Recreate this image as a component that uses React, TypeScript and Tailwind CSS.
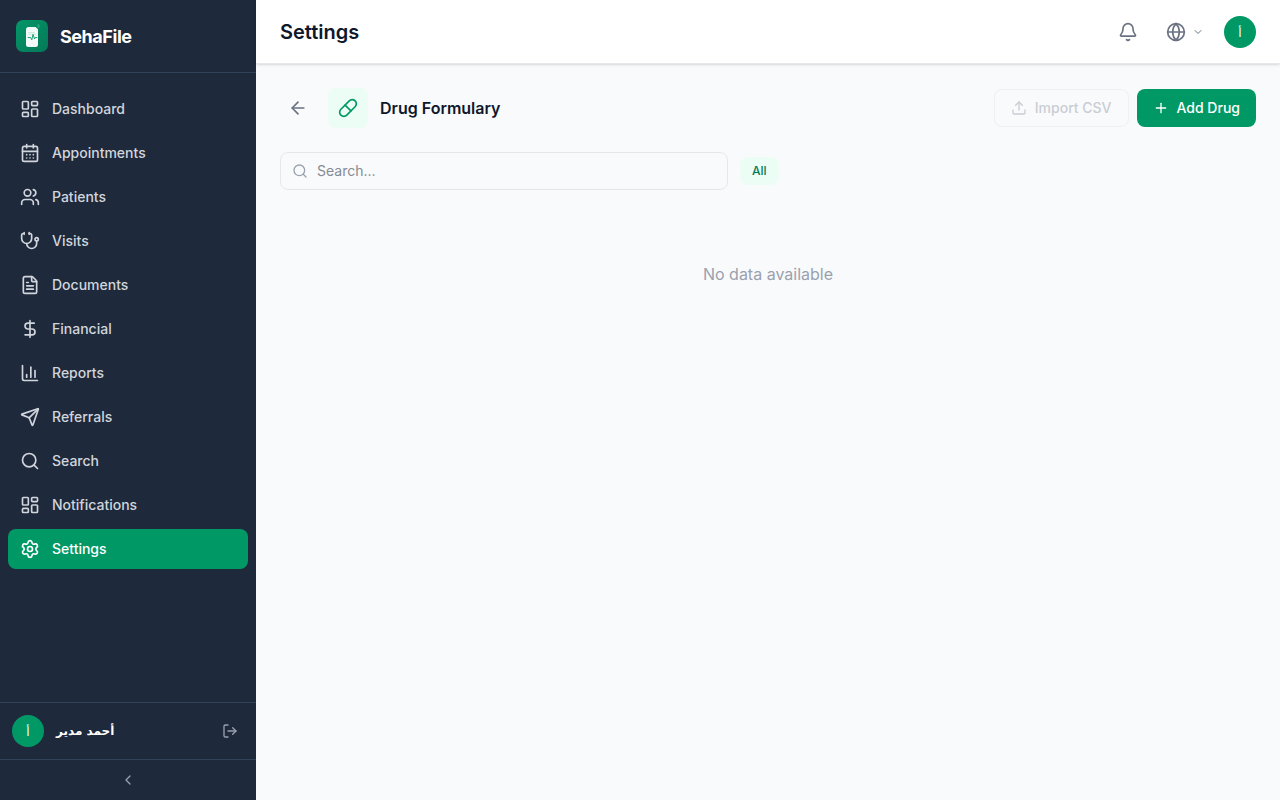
import {
  ArrowLeft,
  Bell,
  CalendarDays,
  ChartColumn,
  ChevronDown,
  ChevronLeft,
  DollarSign,
  FileText,
  Globe,
  LayoutDashboard,
  LogOut,
  Pill,
  Plus,
  Search,
  Send,
  Settings,
  Stethoscope,
  Upload,
  Users,
} from "lucide-react";
import clsx from "clsx";

const navItems = [
  { label: "Dashboard", icon: LayoutDashboard },
  { label: "Appointments", icon: CalendarDays },
  { label: "Patients", icon: Users },
  { label: "Visits", icon: Stethoscope },
  { label: "Documents", icon: FileText },
  { label: "Financial", icon: DollarSign },
  { label: "Reports", icon: ChartColumn },
  { label: "Referrals", icon: Send },
  { label: "Search", icon: Search },
  { label: "Notifications", icon: LayoutDashboard },
  { label: "Settings", icon: Settings, active: true },
];

const Logo = () => (
  <svg viewBox="0 0 32 32" className="h-8 w-8 shrink-0" aria-hidden="true">
    <defs>
      <linearGradient id="logo-bg" x1="0" y1="0" x2="1" y2="1">
        <stop offset="0" stopColor="#059669" />
        <stop offset="1" stopColor="#047857" />
      </linearGradient>
    </defs>
    <rect width="32" height="32" rx="7" fill="url(#logo-bg)" />
    <path
      d="M12.5 7h6.5c.8 0 1 .3 1.500 1l1 .8c.4.400.5.700.5 1.200v14.500a2.500 2.500 0 0 1-2.500 2.500h-7a2.500 2.500 0 0 1-2.500-2.500v-15a2.500 2.500 0 0 1 2.500-2.500z"
      fill="#fff"
      fillOpacity="0.95"
    />
    <path d="M12 12.500h7M12 14.300h8" stroke="#059669" strokeOpacity="0.2" strokeWidth="0.800" />
    <path
      d="M11.700 17.500h2.800l1.300 2.300 1.200-5.500 1.500 4.700.8-1.500h2"
      fill="none"
      stroke="#059669"
      strokeWidth="0.900"
      strokeLinejoin="round"
    />
    <ellipse cx="22.500" cy="6" rx="1.200" ry="2" fill="#a7f3d0" fillOpacity="0.25" />
  </svg>
);

const Avatar = () => (
  <span className="flex h-8 w-8 shrink-0 items-center justify-center rounded-full bg-emerald-600 pt-0.5 font-['DejaVu_Sans',sans-serif] text-xs font-medium text-white">
    أ
  </span>
);

const Sidebar = () => (
  <aside className="flex w-64 shrink-0 flex-col bg-[#1e293b]">
    <div className="flex items-center gap-3 border-b border-slate-700 px-4 py-5">
      <Logo />
      <span className="pt-px text-lg font-bold tracking-tight text-white">SehaFile</span>
    </div>

    <nav className="flex flex-1 flex-col gap-1 px-2 py-4">
      {navItems.map(({ label, icon: Icon, active }) => (
        <a
          key={label}
          href="#"
          aria-current={active ? "page" : undefined}
          className={clsx(
            "flex items-center gap-3 rounded-lg px-3 py-2.5 text-sm font-medium",
            active ? "bg-emerald-600 text-white" : "text-gray-300"
          )}
        >
          <Icon className="h-5 w-5 shrink-0" />
          {label}
        </a>
      ))}
    </nav>

    <div className="flex items-center gap-3 border-t border-slate-700 p-3">
      <Avatar />
      <span className="flex-1 font-['DejaVu_Sans',sans-serif] text-xs font-semibold text-white">أحمد مدير</span>
      <button type="button" aria-label="Log out" className="p-1.5 text-gray-400">
        <LogOut className="h-4 w-4" />
      </button>
    </div>

    <button
      type="button"
      aria-label="Collapse sidebar"
      className="flex items-center justify-center border-t border-slate-700 py-3 text-gray-400"
    >
      <ChevronLeft className="h-4 w-4" />
    </button>
  </aside>
);

const Header = () => (
  <header className="z-10 flex h-16 items-center justify-between border-b border-gray-200 bg-white px-6 shadow-sm">
    <h1 className="text-xl font-semibold text-slate-900">Settings</h1>
    <div className="flex items-center gap-3">
      <button type="button" aria-label="Notifications" className="p-2 text-gray-500">
        <Bell className="h-5 w-5" />
      </button>
      <button type="button" aria-label="Language" className="flex items-center gap-1.5 p-2 text-gray-500">
        <Globe className="h-5 w-5" />
        <ChevronDown className="h-3 w-3" />
      </button>
      <button type="button" aria-label="Account">
        <Avatar />
      </button>
    </div>
  </header>
);

const DrugFormulary = () => (
  <main className="flex flex-1 flex-col gap-6 p-6">
    <div className="flex items-center justify-between">
      <div className="flex items-center gap-3">
        <button type="button" aria-label="Back" className="p-2 text-gray-500">
          <ArrowLeft className="h-5 w-5" />
        </button>
        <div className="flex h-10 w-10 items-center justify-center rounded-lg bg-emerald-50 text-emerald-600">
          <Pill className="h-5 w-5" />
        </div>
        <h2 className="text-base font-semibold text-slate-900">Drug Formulary</h2>
      </div>
      <div className="flex gap-2">
        <button
          type="button"
          disabled
          className="flex items-center gap-2 rounded-lg border border-gray-200 px-4 py-2 text-sm font-medium text-gray-400 opacity-50"
        >
          <Upload className="h-4 w-4" />
          Import CSV
        </button>
        <button
          type="button"
          className="flex items-center gap-2 rounded-lg bg-emerald-600 px-4 py-2 text-sm font-medium text-white"
        >
          <Plus className="h-4 w-4" />
          Add Drug
        </button>
      </div>
    </div>

    <div className="flex items-center gap-3">
      <div className="relative max-w-md flex-1">
        <Search className="absolute top-1/2 left-3 h-4 w-4 -translate-y-1/2 text-gray-400" />
        <input
          type="text"
          aria-label="Search drugs"
          placeholder="Search..."
          className="block w-full rounded-lg border border-gray-200 py-2 pr-4 pl-9 text-sm text-slate-900 placeholder:text-[#868b94]"
        />
      </div>
      <button type="button" className="rounded-lg bg-emerald-50 px-3 py-1.5 text-xs font-medium text-emerald-700">
        All
      </button>
    </div>

    <p className="py-12 text-center text-base text-gray-400">No data available</p>
  </main>
);

const App = () => {
  return (
    <div className="flex min-h-screen bg-gray-50 font-[Inter,sans-serif]">
      <Sidebar />
      <div className="flex min-w-0 flex-1 flex-col">
        <Header />
        <DrugFormulary />
      </div>
    </div>
  );
};

export default App;
